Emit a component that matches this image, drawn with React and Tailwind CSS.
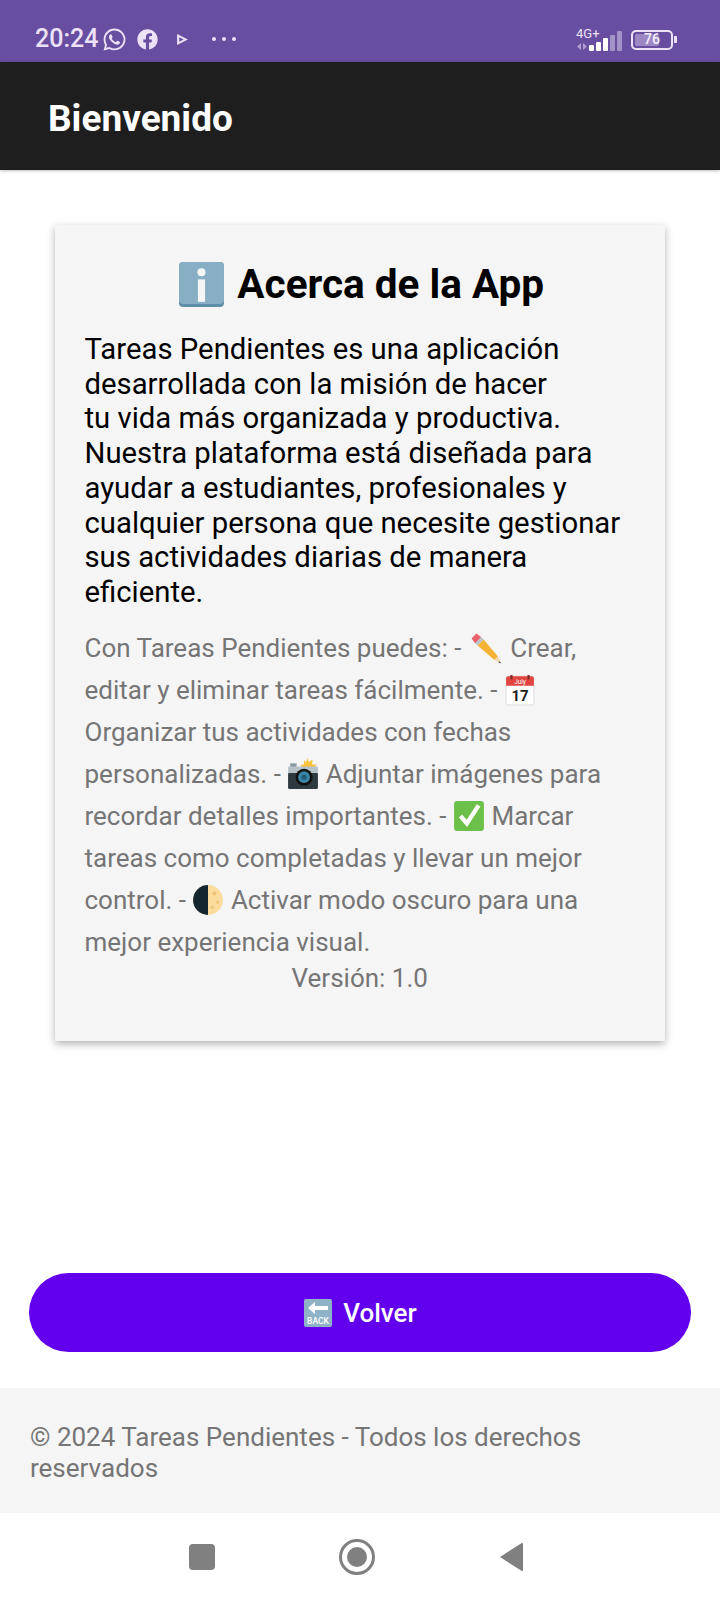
import { FaWhatsapp, FaFacebook } from 'react-icons/fa';

const emojiClass = 'inline-block align-[-7px] w-[32px] h-[32px]';

function InfoEmoji({ className }) {
  return (
    <svg viewBox="0 0 46 46" className={className}>
      <rect x="1" y="1" width="44" height="44" rx="4" fill="#5f8fa8" />
      <rect x="1" y="1" width="44" height="41" rx="4" fill="#88aec3" />
      <circle cx="23" cy="11" r="4" fill="#f4f6f7" />
      <rect x="19.5" y="18" width="7" height="22" fill="#f4f6f7" />
    </svg>
  );
}

function PencilEmoji() {
  return (
    <svg viewBox="0 0 30 30" className="inline-block align-[-9px] w-[36px] h-[36px]">
      <path d="M3 7 L7 3 L11 6 L6 11 Z" fill="#e8606a" />
      <path d="M6 11 L11 6 L13 8 L8 13 Z" fill="#b9c4cc" />
      <path d="M8 13 L13 8 L25 22 L22 25 Z" fill="#f5b335" />
      <path d="M22 25 L25 22 L28 28 Z" fill="#f4d9b0" />
      <path d="M26 26 L28 28 L25.5 27 Z" fill="#333" />
    </svg>
  );
}

function CalendarEmoji() {
  return (
    <svg viewBox="0 0 30 30" className={emojiClass}>
      <rect x="2" y="2" width="26" height="27" rx="2" fill="#fff" stroke="#d5d8dc" strokeWidth="0.8" />
      <path d="M2 11 V4 a2 2 0 0 1 2 -2 H26 a2 2 0 0 1 2 2 V11 Z" fill="#e2453f" />
      <rect x="6" y="1" width="2" height="4" fill="#7d2a27" />
      <rect x="22" y="1" width="2" height="4" fill="#7d2a27" />
      <text x="15" y="9.5" textAnchor="middle" fontSize="6" fill="#fff" fontFamily="Roboto, sans-serif">July</text>
      <text x="15" y="25" textAnchor="middle" fontSize="14" fontWeight="700" fill="#222" fontFamily="Roboto, sans-serif">17</text>
    </svg>
  );
}

function CameraEmoji() {
  return (
    <svg viewBox="0 0 30 30" className={emojiClass}>
      <path d="M19 0 L20.5 4 L24 1.5 L23.5 6 L28 6 L25 9 L14 9 L13 6 L16 6 L16 2 L18 4 Z" fill="#f8c33c" />
      <rect x="3" y="5" width="6" height="4" fill="#8a9aa3" />
      <rect x="1" y="8" width="28" height="7" rx="1" fill="#b7c2c8" />
      <rect x="1" y="14" width="28" height="15" rx="1" fill="#2f3a40" />
      <circle cx="16" cy="18" r="8" fill="#111" />
      <circle cx="16" cy="18" r="5.5" fill="#3b87a8" />
      <circle cx="16" cy="18" r="2.5" fill="#1f5c78" />
    </svg>
  );
}

function CheckEmoji() {
  return (
    <svg viewBox="0 0 30 30" className={emojiClass}>
      <rect x="1" y="1" width="28" height="28" rx="3" fill="#6cc04a" />
      <path d="M7 15 L13 22 L24 5" fill="none" stroke="#fff" strokeWidth="4" />
    </svg>
  );
}

function MoonEmoji() {
  return (
    <svg viewBox="0 0 30 30" className={emojiClass}>
      <circle cx="15" cy="15" r="14" fill="#fcdc9c" />
      <path d="M15 1 A14 14 0 0 0 15 29 Z" fill="#14272f" />
      <circle cx="21" cy="9" r="2" fill="#ecc47c" />
      <circle cx="24" cy="17" r="1.5" fill="#ecc47c" />
      <circle cx="19" cy="22" r="1.5" fill="#ecc47c" />
    </svg>
  );
}

function BackEmoji() {
  return (
    <svg viewBox="0 0 30 30" className="w-[30px] h-[30px]">
      <rect x="1" y="1" width="28" height="28" rx="2" fill="#8fb3c6" />
      <path d="M5 10 L12 4 V8 H25 V12 H12 V16 Z" fill="#fff" />
      <text x="15" y="26" textAnchor="middle" fontSize="8.5" fill="#fff" fontFamily="Roboto, sans-serif">BACK</text>
    </svg>
  );
}

function StatusBar() {
  return (
    <div className="h-[62px] bg-[#674ea0] flex items-center pl-[35px] pr-[43px] pt-[16px] text-[#ece2f8]">
      <span className="text-[25px] font-medium">20:24</span>
      <FaWhatsapp className="w-[25px] h-[25px] ml-[4px]" />
      <FaFacebook className="w-[21px] h-[21px] ml-[10px]" />
      <svg viewBox="0 0 12 12" className="w-[13px] h-[13px] ml-[18px]">
        <path d="M1 1 L11 6 L1 11 Z M3 4 V8 L7 6 Z" fill="#ece2f8" fillRule="evenodd" />
      </svg>
      <div className="flex gap-[6px] ml-[23px]">
        <div className="w-[4px] h-[4px] rounded-full bg-[#ece2f8]" />
        <div className="w-[4px] h-[4px] rounded-full bg-[#ece2f8]" />
        <div className="w-[4px] h-[4px] rounded-full bg-[#ece2f8]" />
      </div>
      <div className="ml-auto flex items-center pt-[1px]">
        <svg viewBox="0 0 46 22" className="w-[46px] h-[22px] overflow-visible">
          <text x="0" y="9" fontSize="13" fill="#ece2f8" fontFamily="Roboto, sans-serif">4G+</text>
          <path d="M1 17.5 L5 14 V21 Z M7 14 L11 17.5 L7 21 Z" fill="#ece2f8" opacity="0.55" />
          <rect x="13" y="16" width="5" height="6" rx="1" fill="#fff" />
          <rect x="20" y="13" width="5" height="9" rx="1" fill="#fff" />
          <rect x="27" y="9" width="5" height="13" rx="1" fill="#fff" />
          <rect x="34" y="6" width="5" height="16" rx="1" fill="#fff" opacity="0.4" />
          <rect x="41" y="2" width="5" height="20" rx="1" fill="#fff" opacity="0.4" />
        </svg>
        <div className="relative ml-[9px] w-[42px] h-[20px] rounded-[5px] border-2 border-[#ece2f8] p-[2px] flex">
          <div className="w-[72%] bg-[#ece2f8] opacity-40 rounded-[2px]" />
          <span className="absolute inset-0 flex items-center justify-center text-[14px] font-medium text-[#f5effc]">76</span>
        </div>
        <div className="w-[3px] h-[7px] ml-[1px] bg-[#ece2f8] rounded-r-[1px]" />
      </div>
    </div>
  );
}

function NavBar() {
  return (
    <div className="flex-1 flex items-center pl-[189px] gap-[124px]">
      <div className="w-[26px] h-[26px] rounded-[4px] bg-[#808080]" />
      <div className="w-[36px] h-[36px] rounded-full border-[3px] border-[#808080] flex items-center justify-center">
        <div className="w-[20px] h-[20px] rounded-full bg-[#808080]" />
      </div>
      <svg viewBox="0 0 25 30" className="w-[25px] h-[30px]">
        <path d="M24 2 V28 a1 1 0 0 1 -1.6 .8 L1 15 L22.4 1.2 A1 1 0 0 1 24 2 Z" fill="#808080" />
      </svg>
    </div>
  );
}

export default function App() {
  return (
    <div className="w-[720px] h-[1600px] bg-white flex flex-col font-['Roboto',sans-serif]">
      <StatusBar />

      <header className="h-[108px] bg-[#1e1e1e] flex items-center pl-[48px] pt-[5px] shadow-[0_1px_3px_rgba(0,0,0,0.25)]">
        <h1 className="text-[37px] font-bold text-white">Bienvenido</h1>
      </header>

      <main className="flex-1 flex flex-col">
        <div className="mx-[55px] mt-[55px] h-[816px] bg-[#f5f5f5] shadow-[0_3px_8px_rgba(0,0,0,0.3)] pl-[29.5px] pr-[30px] pt-[34px]">
          <h2 className="flex items-center justify-center gap-[12px] h-[50px] pl-[3px] text-[40.5px] font-bold text-black">
            <InfoEmoji className="w-[47px] h-[47px]" />
            <span>Acerca de la App</span>
          </h2>
          <p className="mt-[23px] text-[29.3px] leading-[34.7px] text-black">
            Tareas Pendientes es una aplicación desarrollada con la misión de hacer<br />
            tu vida más organizada y productiva. Nuestra plataforma está diseñada para ayudar a estudiantes, profesionales y cualquier persona que necesite gestionar sus actividades diarias de manera eficiente.
          </p>
          <p className="mt-[17px] text-[26px] leading-[42px] text-[#757575]">
            Con Tareas Pendientes puedes: - <PencilEmoji /> Crear, editar y eliminar tareas fácilmente. - <CalendarEmoji /> Organizar tus actividades con fechas personalizadas. - <CameraEmoji /> Adjuntar imágenes para recordar detalles importantes. - <CheckEmoji /> Marcar tareas como completadas y llevar un mejor control. - <MoonEmoji /> Activar modo oscuro para una mejor experiencia visual.
          </p>
          <p className="text-[26px] leading-[30px] text-center text-[#757575]">Versión: 1.0</p>
        </div>

        <button className="mx-[29px] mt-[232px] h-[79px] rounded-full bg-[#6200ee] flex items-center justify-center gap-[10px] text-white text-[26px] font-medium pt-[1px]">
          <BackEmoji />
          <span>Volver</span>
        </button>

        <footer className="mt-[36px] h-[125px] bg-[#f5f5f5] px-[30px] pt-[34px] text-[26px] leading-[31px] text-[#757575]">
          © 2024 Tareas Pendientes - Todos los derechos reservados
        </footer>

        <NavBar />
      </main>
    </div>
  );
}
